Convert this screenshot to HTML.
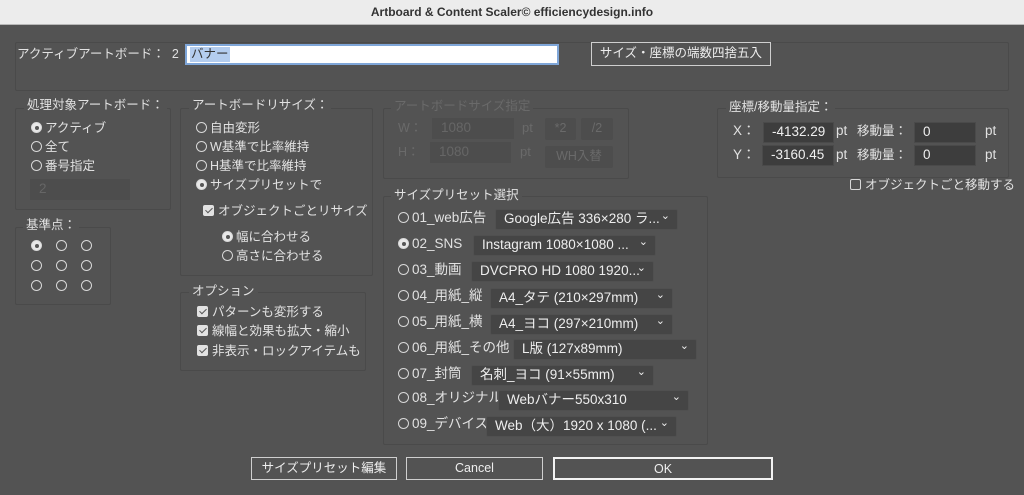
<!DOCTYPE html>
<html><head><meta charset="utf-8"><style>
*{box-sizing:border-box;margin:0;padding:0}
body{width:1024px;height:495px;background:#535353;font-family:"Liberation Sans","Noto Sans CJK JP",sans-serif;font-size:12.5px;color:#e2e2e2;position:relative;overflow:hidden}
.a{position:absolute;white-space:nowrap;line-height:14px}
.title{position:absolute;left:0;top:0;width:1024px;height:25px;background:#ececec;border-bottom:1px solid #b8b8b8;color:#333;font-weight:bold;font-size:12px;text-align:center;line-height:25px}
.p{position:absolute;border:1px solid #4a4a4a;border-radius:2px}
.lg{position:absolute;background:#535353;padding:0 3px;line-height:14px;white-space:nowrap}
.r{display:inline-block;width:11px;height:11px;border:1px solid #d8d8d8;border-radius:50%;vertical-align:-1px;margin-right:3px;position:relative}
.r.on{background:#e8e8e8}
.r.on::after{content:"";position:absolute;left:2.5px;top:2.5px;width:4px;height:4px;border-radius:50%;background:#555}
.c{display:inline-block;width:11px;height:11px;background:#e2e2e2;border-radius:2px;vertical-align:-1px;margin-right:4px;position:relative}
.c::after{content:"";position:absolute;left:3.5px;top:1px;width:3px;height:6px;border:solid #555;border-width:0 1.5px 1.5px 0;transform:rotate(45deg)}
.cb{display:inline-block;width:11px;height:11px;border:1px solid #d8d8d8;border-radius:2px;vertical-align:-1px;margin-right:4px}
.in{position:absolute;background:#3d3d3d;border:1px solid #4a4a4a;color:#f0f0f0;line-height:18px;padding-left:8px;font-size:13.5px}
.dis{background:#4d4d4d;border-color:#4d4d4d;color:#666}
.dd{position:absolute;background:#454545;border:1px solid #505050;border-radius:2px;line-height:18px;padding-left:8px;font-size:13.5px;color:#eee}
.dd::after{content:"⌄";position:absolute;right:7px;top:-3px;font-size:11px}
.btn{position:absolute;border:1.5px solid #cfcfcf;text-align:center;line-height:20px;color:#eee}
.gr{color:#6a6a6a}
.gb{position:absolute;background:#4d4d4d;color:#6a6a6a;text-align:center;line-height:20px;border-radius:2px}
</style></head><body>
<div class="title">Artboard &amp; Content Scaler© efficiencydesign.info</div>

<div class="p" style="left:15px;top:42px;width:994px;height:49px"></div>
<div class="a" style="left:17px;top:47px">アクティブアートボード：&nbsp; 2</div>
<div style="position:absolute;left:185px;top:44px;width:374px;height:21px;background:#fff;border:2px solid #7fa6d8"><span style="position:absolute;left:3px;top:1px;background:#b4cdef;color:#333;line-height:15px;padding:0 1px;font-size:12.5px">バナー</span></div>
<div class="btn" style="left:591px;top:42px;width:180px;height:24px">サイズ・座標の端数四捨五入</div>

<div class="p" style="left:15px;top:108px;width:156px;height:102px"></div>
<div class="lg" style="left:24px;top:98px">処理対象アートボード：</div>
<div class="a" style="left:31px;top:121px"><span class="r on"></span>アクティブ</div>
<div class="a" style="left:31px;top:140px"><span class="r"></span>全て</div>
<div class="a" style="left:31px;top:159px"><span class="r"></span>番号指定</div>
<div class="in dis" style="left:30px;top:179px;width:100px;height:21px">2</div>

<div class="p" style="left:15px;top:227px;width:96px;height:78px"></div>
<div class="lg" style="left:23px;top:218px">基準点：</div>
<div class="a" style="left:31px;top:239px"><span class="r on" style="margin-right:14px"></span><span class="r" style="margin-right:14px"></span><span class="r"></span></div>
<div class="a" style="left:31px;top:259px"><span class="r" style="margin-right:14px"></span><span class="r" style="margin-right:14px"></span><span class="r"></span></div>
<div class="a" style="left:31px;top:279px"><span class="r" style="margin-right:14px"></span><span class="r" style="margin-right:14px"></span><span class="r"></span></div>

<div class="p" style="left:180px;top:108px;width:193px;height:168px"></div>
<div class="lg" style="left:189px;top:98px">アートボードリサイズ：</div>
<div class="a" style="left:196px;top:121px"><span class="r"></span>自由変形</div>
<div class="a" style="left:196px;top:140px"><span class="r"></span>W基準で比率維持</div>
<div class="a" style="left:196px;top:159px"><span class="r"></span>H基準で比率維持</div>
<div class="a" style="left:196px;top:178px"><span class="r on"></span>サイズプリセットで</div>
<div class="a" style="left:203px;top:204px"><span class="c"></span>オブジェクトごとリサイズ</div>
<div class="a" style="left:222px;top:230px"><span class="r on"></span>幅に合わせる</div>
<div class="a" style="left:222px;top:249px"><span class="r"></span>高さに合わせる</div>

<div class="p" style="left:180px;top:292px;width:186px;height:79px"></div>
<div class="lg" style="left:189px;top:284px">オプション</div>
<div class="a" style="left:197px;top:305px"><span class="c"></span>パターンも変形する</div>
<div class="a" style="left:197px;top:324px"><span class="c"></span>線幅と効果も拡大・縮小</div>
<div class="a" style="left:197px;top:344px"><span class="c"></span>非表示・ロックアイテムも</div>

<div class="p" style="left:383px;top:108px;width:246px;height:71px"></div>
<div class="lg gr" style="left:391px;top:99px">アートボードサイズ指定</div>
<div class="a gr" style="left:398px;top:121px">W：</div>
<div class="in dis" style="left:432px;top:118px;width:82px;height:21px">1080</div>
<div class="a gr" style="left:522px;top:121px;font-size:13px">pt</div>
<div class="gb" style="left:545px;top:118px;width:31px;height:22px">*2</div>
<div class="gb" style="left:581px;top:118px;width:32px;height:22px">/2</div>
<div class="a gr" style="left:398px;top:145px">H：</div>
<div class="in dis" style="left:430px;top:142px;width:81px;height:21px">1080</div>
<div class="a gr" style="left:520px;top:145px;font-size:13px">pt</div>
<div class="gb" style="left:545px;top:146px;width:68px;height:22px">WH入替</div>

<div class="p" style="left:383px;top:196px;width:325px;height:249px"></div>
<div class="lg" style="left:391px;top:188px">サイズプリセット選択</div>
<div class="a" style="left:398px;top:211px;font-size:13.5px"><span class="r"></span>01_web広告</div>
<div class="dd" style="left:495px;top:209px;width:183px;height:21px">Google広告 336×280 ラ...</div>
<div class="a" style="left:398px;top:237px;font-size:13.5px"><span class="r on"></span>02_SNS</div>
<div class="dd" style="left:473px;top:235px;width:183px;height:21px">Instagram 1080×1080 ...</div>
<div class="a" style="left:398px;top:263px;font-size:13.5px"><span class="r"></span>03_動画</div>
<div class="dd" style="left:471px;top:261px;width:183px;height:21px">DVCPRO HD 1080 1920...</div>
<div class="a" style="left:398px;top:289px;font-size:13.5px"><span class="r"></span>04_用紙_縦</div>
<div class="dd" style="left:490px;top:288px;width:183px;height:21px">A4_タテ (210×297mm)</div>
<div class="a" style="left:398px;top:315px;font-size:13.5px"><span class="r"></span>05_用紙_横</div>
<div class="dd" style="left:490px;top:314px;width:183px;height:21px">A4_ヨコ (297×210mm)</div>
<div class="a" style="left:398px;top:341px;font-size:13.5px"><span class="r"></span>06_用紙_その他</div>
<div class="dd" style="left:513px;top:339px;width:184px;height:21px">L版 (127x89mm)</div>
<div class="a" style="left:398px;top:367px;font-size:13.5px"><span class="r"></span>07_封筒</div>
<div class="dd" style="left:471px;top:365px;width:183px;height:21px">名刺_ヨコ (91×55mm)</div>
<div class="a" style="left:398px;top:391px;font-size:13.5px"><span class="r"></span>08_オリジナル</div>
<div class="dd" style="left:498px;top:390px;width:191px;height:21px">Webバナー550x310</div>
<div class="a" style="left:398px;top:417px;font-size:13.5px"><span class="r"></span>09_デバイス</div>
<div class="dd" style="left:486px;top:416px;width:191px;height:21px">Web（大）1920 x 1080 (...</div>

<div class="p" style="left:717px;top:108px;width:292px;height:70px"></div>
<div class="lg" style="left:726px;top:100px">座標/移動量指定：</div>
<div class="a" style="left:733px;top:124px;font-size:13.5px">X：</div>
<div class="in" style="left:763px;top:122px;width:71px;height:21px">-4132.29</div>
<div class="a" style="left:836px;top:124px;font-size:13.5px">pt</div>
<div class="a" style="left:857px;top:124px">移動量：</div>
<div class="in" style="left:914px;top:122px;width:62px;height:21px">0</div>
<div class="a" style="left:985px;top:124px;font-size:13.5px">pt</div>
<div class="a" style="left:733px;top:148px;font-size:13.5px">Y：</div>
<div class="in" style="left:762px;top:145px;width:72px;height:21px">-3160.45</div>
<div class="a" style="left:836px;top:148px;font-size:13.5px">pt</div>
<div class="a" style="left:857px;top:148px">移動量：</div>
<div class="in" style="left:914px;top:145px;width:62px;height:21px">0</div>
<div class="a" style="left:985px;top:148px;font-size:13.5px">pt</div>
<div class="a" style="left:850px;top:178px"><span class="cb"></span>オブジェクトごと移動する</div>

<div class="btn" style="left:251px;top:457px;width:146px;height:23px">サイズプリセット編集</div>
<div class="btn" style="left:406px;top:457px;width:137px;height:23px">Cancel</div>
<div class="btn" style="left:553px;top:457px;width:220px;height:23px;border:2px solid #f2f2f2">OK</div>
</body></html>
